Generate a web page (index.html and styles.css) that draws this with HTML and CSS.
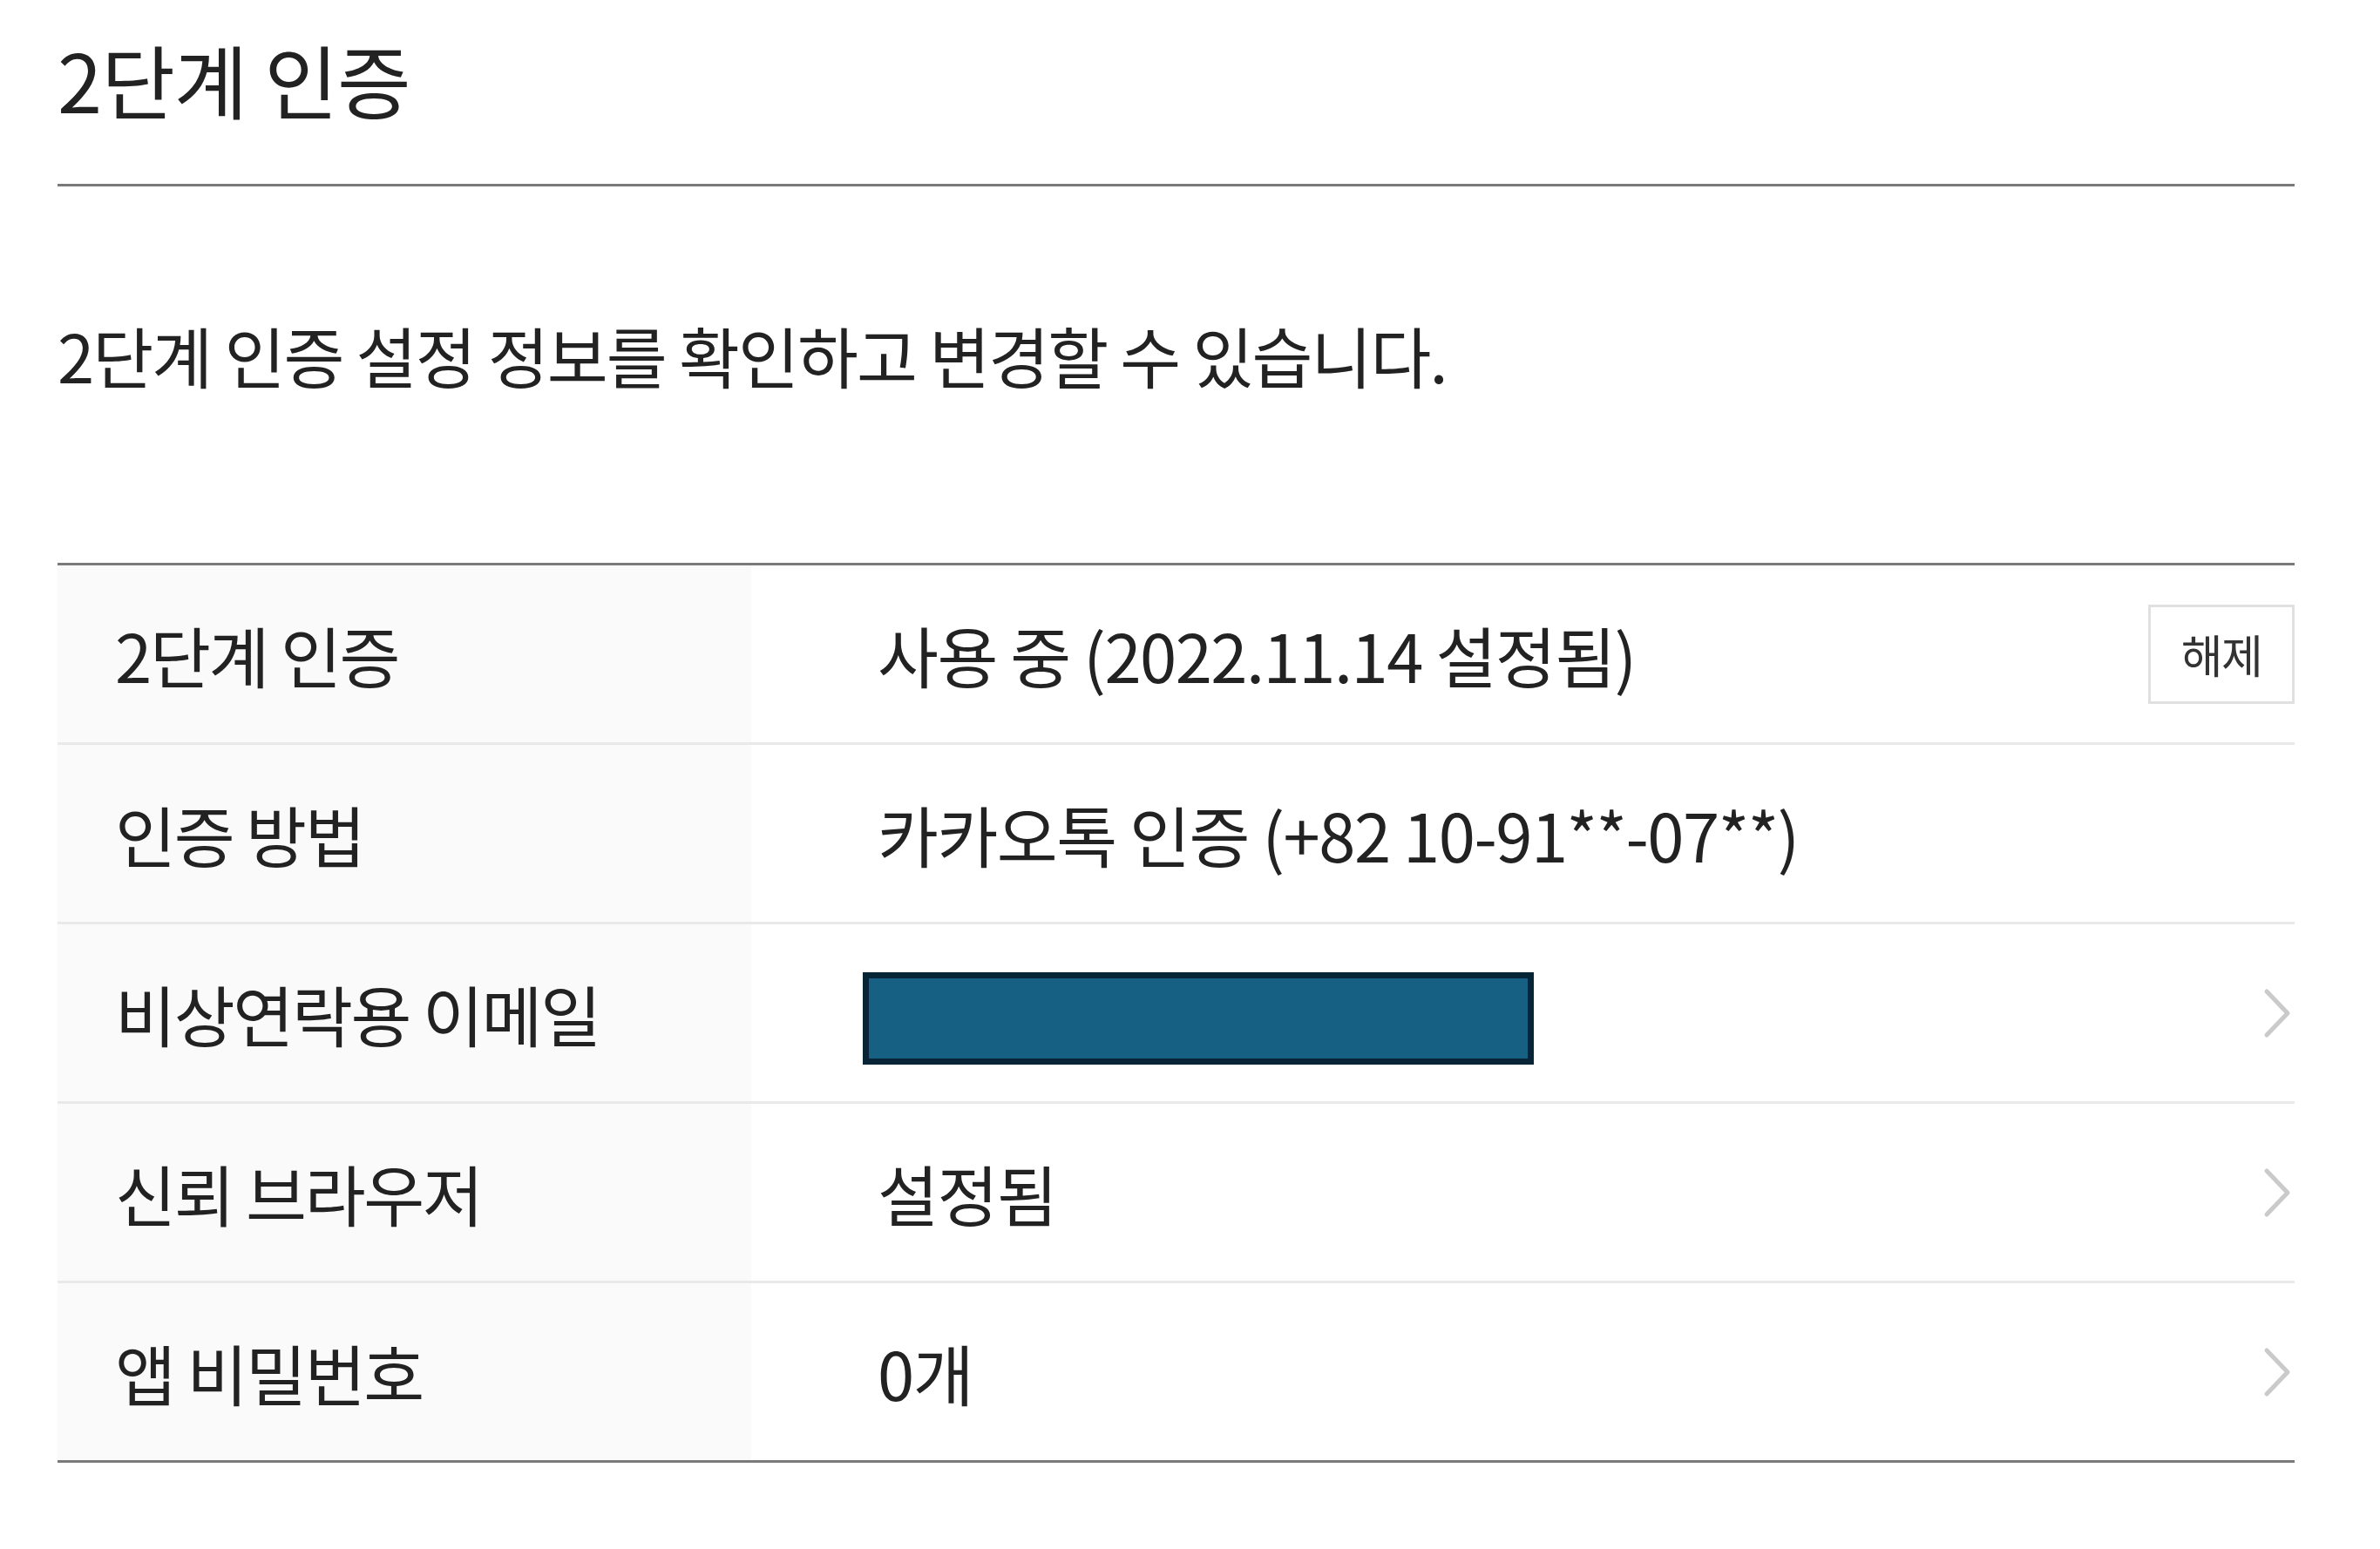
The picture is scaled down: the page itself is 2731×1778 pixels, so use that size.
FILE: index.html
```html
<!DOCTYPE html>
<html>
<head>
	<meta http-equiv="Content-Type" content="text/html;charset=UTF-8">
	<title>2단계 인증</title>
	<link rel="stylesheet" href="styles.css">
</head>
<body>
	<div class="wrap">
		<div class="head">
			<h2 class="title">2단계 인증</h2>
		</div>
		<p class="desc">2단계 인증 설정 정보를 확인하고 변경할 수 있습니다.</p>

		<div class="info">
			<div class="row">
				<div class="th">2단계 인증</div>
				<div class="td">
					<span class="txt">사용 중 (2022.11.14 설정됨)</span>
					<a href="javascript:;" class="btn">해제</a>
				</div>
			</div>
			<div class="row">
				<div class="th">인증 방법</div>
				<div class="td">
					<span class="txt">카카오톡 인증 (+82 10-91**-07**)</span>
				</div>
			</div>
			<div class="row">
				<div class="th">비상연락용 이메일</div>
				<div class="td">
					<span class="mask"></span>
					<a href="javascript:;" class="arrow">
						<svg width="32" height="58" viewBox="0 0 32 58"><polyline points="4,4 28,29 4,54" fill="none" stroke="#cacaca" stroke-width="5" stroke-linecap="round" stroke-linejoin="round"/></svg>
					</a>
				</div>
			</div>
			<div class="row">
				<div class="th">신뢰 브라우저</div>
				<div class="td">
					<span class="txt">설정됨</span>
					<a href="javascript:;" class="arrow">
						<svg width="32" height="58" viewBox="0 0 32 58"><polyline points="4,4 28,29 4,54" fill="none" stroke="#cacaca" stroke-width="5" stroke-linecap="round" stroke-linejoin="round"/></svg>
					</a>
				</div>
			</div>
			<div class="row">
				<div class="th">앱 비밀번호</div>
				<div class="td">
					<span class="txt">0개</span>
					<a href="javascript:;" class="arrow">
						<svg width="32" height="58" viewBox="0 0 32 58"><polyline points="4,4 28,29 4,54" fill="none" stroke="#cacaca" stroke-width="5" stroke-linecap="round" stroke-linejoin="round"/></svg>
					</a>
				</div>
			</div>
		</div>
	</div>
</body>
</html>
```
FILE: styles.css
```css
*{
	margin: 0;
	padding: 0;
}
body{
	background-color: #fff;
	color: #222;
	font-family: "Noto Sans CJK KR", "Noto Sans", sans-serif;
}
.wrap{
	width: 2567px;
	margin-left: 66px;
}
.head{
	padding-top: 40px;
	padding-bottom: 71px;
	border-bottom: 3px solid #7a7a7a;
}
.head .title{
	font-size: 92px;
	font-weight: 400;
	line-height: 100px;
	letter-spacing: -0.01em;
}
.desc{
	margin-top: 143px;
	font-size: 76px;
	line-height: 100px;
	letter-spacing: -0.025em;
}
.info{
	margin-top: 189px;
	border-top: 3px solid #7a7a7a;
	border-bottom: 3px solid #7a7a7a;
}
.info .row{
	display: grid;
	grid-template-columns: 796px 1fr;
	height: 203px;
	border-bottom: 3px solid #e9e9e9;
	font-size: 76px;
	letter-spacing: -0.02em;
}
.info .row:last-child{
	border-bottom: 0;
}
.info .th{
	display: flex;
	align-items: center;
	padding-left: 66px;
	background-color: #fafafa;
	letter-spacing: -0.03em;
}
.info .td{
	display: flex;
	align-items: center;
	justify-content: space-between;
	padding-left: 145px;
}
.info .btn{
	display: flex;
	align-items: center;
	justify-content: center;
	width: 168px;
	height: 114px;
	box-sizing: border-box;
	border: 3px solid #e0e0e0;
	font-size: 52px;
	color: #333;
	text-decoration: none;
}
.info .mask{
	display: block;
	width: 770px;
	height: 106px;
	box-sizing: border-box;
	margin-left: -17px;
	margin-top: 12px;
	border: 7px solid #072536;
	background-color: #166083;
}
.info .arrow{
	display: flex;
	margin-right: 4px;
}
```
